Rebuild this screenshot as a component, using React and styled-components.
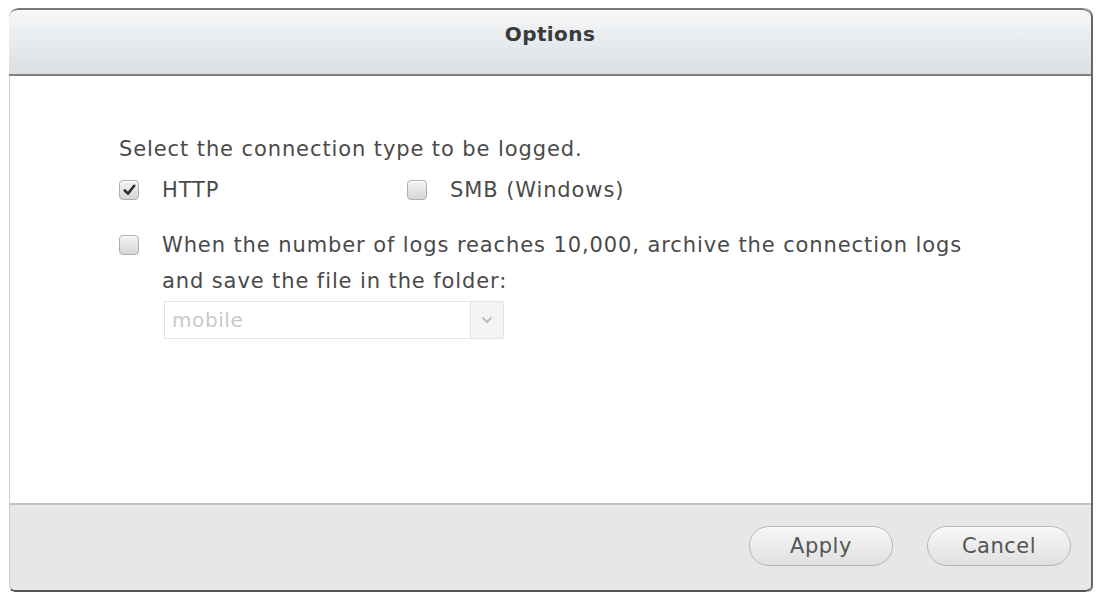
import React from "react";
import styled, { createGlobalStyle } from "styled-components";

const Global = createGlobalStyle`
  html, body { margin: 0; padding: 0; background: #fff; }
  body { font-family: "DejaVu Sans", Verdana, sans-serif; }
`;

const Dialog = styled.div`
  margin: 8px 0 0 9px;
  width: 1084px;
  height: 584px;
  display: flex;
  flex-direction: column;
  box-sizing: border-box;
  border-right: 2px solid #666;
  border-radius: 9px 9px 6px 6px;
  overflow: hidden;
`;

const Header = styled.div`
  height: 68px;
  flex: none;
  box-sizing: border-box;
  border-top: 2px solid #7a7a7a;
  border-bottom: 2px solid #808080;
  border-radius: 9px 9px 0 0;
  background: linear-gradient(#f6f7f8, #e9ecef 45%, #dbdfe3);
  display: flex;
  justify-content: center;
  padding-top: 12px;
  font-size: 20px;
  letter-spacing: 0.4px;
  font-weight: bold;
  color: #3a3a3a;
`;

const Body = styled.div`
  flex: 1;
  background: #fff;
  border-left: 1px solid #cfcfcf;
  padding: 55px 0 0 109px;
  color: #4a4a4a;
  font-size: 21px;
  letter-spacing: 0.9px;
  display: flex;
  flex-direction: column;
`;

const Line = styled.div`
  line-height: 36px;
  margin-bottom: ${(p) => p.$mb || 0}px;
`;

const Row = styled.div`
  display: flex;
  align-items: flex-start;
  margin-bottom: ${(p) => p.$mb || 0}px;
`;

const Opt = styled.label`
  display: flex;
  align-items: flex-start;
  width: ${(p) => (p.$w ? p.$w + "px" : "auto")};
`;

const Box = styled.span`
  flex: none;
  width: 20px;
  height: 20px;
  box-sizing: border-box;
  margin-top: 8px;
  margin-right: 23px;
  border: 1px solid #b0b0b0;
  border-radius: 4px;
  background: linear-gradient(#f3f3f3, #d6d6d6);
  box-shadow: inset 0 1px 0 #fff;
  display: flex;
  align-items: center;
  justify-content: center;
`;

const Text = styled.div`
  line-height: 36px;
`;

const Select = styled.div`
  margin: 2px 0 0 45px;
  width: 340px;
  height: 38px;
  box-sizing: border-box;
  border: 1px solid #e4e4e4;
  display: flex;
  align-items: center;
  color: #c9c9c9;
  font-size: 20px;
  letter-spacing: 0.6px;
`;

const SelectValue = styled.span`
  flex: 1;
  padding-left: 7px;
`;

const SelectArrow = styled.span`
  width: 32px;
  height: 100%;
  border-left: 1px solid #e4e4e4;
  background: #f4f4f4;
  display: flex;
  align-items: center;
  justify-content: center;
`;

const Footer = styled.div`
  height: 89px;
  flex: none;
  box-sizing: border-box;
  background: #e7e7e7;
  border-top: 2px solid #c2c2c2;
  border-bottom: 2px solid #555;
  border-left: 1px solid #cfcfcf;
  border-radius: 0 0 6px 6px;
  display: flex;
  justify-content: flex-end;
  align-items: center;
  gap: 34px;
  padding: 0 20px 4px 0;
`;

const Button = styled.button`
  width: 144px;
  height: 40px;
  border-radius: 20px;
  border: 1px solid #b5b5b5;
  background: linear-gradient(#f7f7f7, #e0e0e0);
  box-shadow: inset 0 1px 0 #fff;
  font-family: "DejaVu Sans", Verdana, sans-serif;
  font-size: 21px;
  letter-spacing: 0.5px;
  color: #555;
  padding: 0;
`;

const Check = () => (
  <svg width="13" height="12" viewBox="0 0 13 12">
    <path d="M1.8 6.5 L5 9.6 L11.2 1.8" fill="none" stroke="#2e2e2e" strokeWidth="2.6" strokeLinecap="round" strokeLinejoin="round" />
  </svg>
);

const Chevron = () => (
  <svg width="12" height="8" viewBox="0 0 12 8">
    <path d="M1.5 1.5 L6 6 L10.5 1.5" fill="none" stroke="#bdbdbd" strokeWidth="2" />
  </svg>
);

export default function App() {
  return (
    <>
      <Global />
      <Dialog>
        <Header>Options</Header>
        <Body>
          <Line $mb={5}>Select the connection type to be logged.</Line>
          <Row $mb={19}>
            <Opt $w={288}>
              <Box><Check /></Box>
              <Text>HTTP</Text>
            </Opt>
            <Opt>
              <Box />
              <Text>SMB (Windows)</Text>
            </Opt>
          </Row>
          <Row>
            <Opt>
              <Box />
              <Text>
                When the number of logs reaches 10,000, archive the connection logs
                <br />
                and save the file in the folder:
              </Text>
            </Opt>
          </Row>
          <Select>
            <SelectValue>mobile</SelectValue>
            <SelectArrow><Chevron /></SelectArrow>
          </Select>
        </Body>
        <Footer>
          <Button>Apply</Button>
          <Button>Cancel</Button>
        </Footer>
      </Dialog>
    </>
  );
}
